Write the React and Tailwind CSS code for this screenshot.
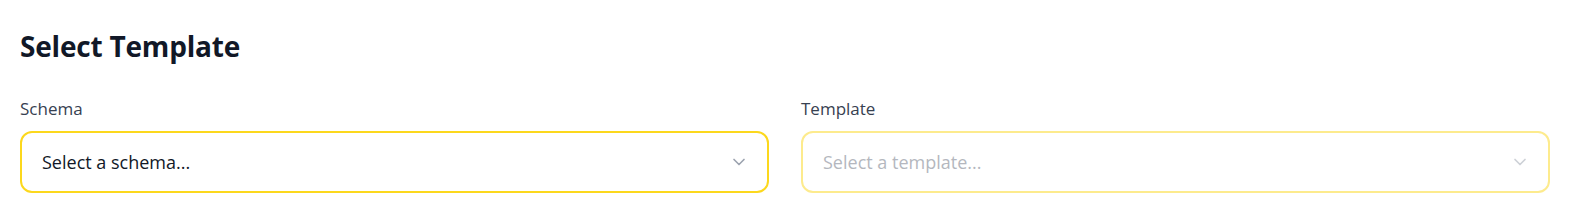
import React from "react";

function Chevron({ className }) {
  return (
    <svg className={className} width="20" height="20" viewBox="0 0 24 24" fill="none" stroke="currentColor" strokeWidth="2" strokeLinecap="round" strokeLinejoin="round">
      <path d="m6 9 6 6 6-6" />
    </svg>
  );
}

export default function App() {
  return (
    <div className="bg-white pl-5 pr-[23px] pt-[28px] pb-[26px]" style={{ fontFamily: '"Open Sans", "Noto Sans", sans-serif' }}>
      <h2 className="text-[28px] leading-[36px] font-bold text-[#111827] tracking-[-0.2px]">Select Template</h2>
      <div className="grid grid-cols-2 gap-8 mt-[33px]">
        <div>
          <label className="block text-[17px] leading-[24px] font-medium text-[#374151] mb-[10px]">Schema</label>
          <div className="h-[62px] border-2 border-[#fcd81d] rounded-xl flex items-center justify-between pl-5 pr-[18px] bg-white">
            <span className="text-[18px] leading-[27px] text-[#111827]">Select a schema...</span>
            <Chevron className="text-[#9ca3af]" />
          </div>
        </div>
        <div>
          <label className="block text-[17px] leading-[24px] font-medium text-[#374151] mb-[10px]">Template</label>
          <div className="h-[62px] border-2 border-[#fcd81d] rounded-xl flex items-center justify-between pl-5 pr-[18px] bg-white opacity-50">
            <span className="text-[18px] leading-[27px] text-[#6b7280]">Select a template...</span>
            <Chevron className="text-[#9ca3af]" />
          </div>
        </div>
      </div>
    </div>
  );
}
